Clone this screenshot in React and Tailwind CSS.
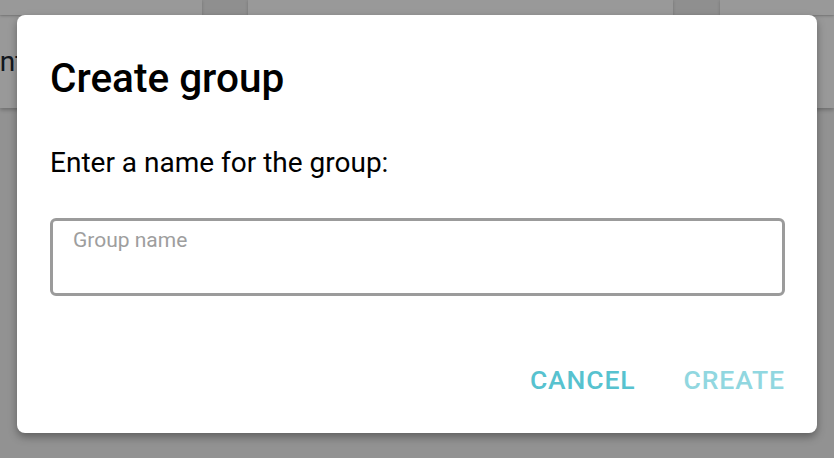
import React from "react";

const font = { fontFamily: "Roboto, 'Liberation Sans', sans-serif" };

const BackgroundPage = () => (
  <div className="w-[834px] h-[458px] bg-[#f4f4f4] overflow-hidden">
    {/* top cards strip */}
    <div className="flex h-[15px] bg-[#eeeeee]">
      <div className="w-[202px] bg-white shadow-[0_1px_3px_rgba(0,0,0,0.2)]" />
      <div className="w-[46px]" />
      <div className="w-[425px] bg-white shadow-[0_1px_3px_rgba(0,0,0,0.2)]" />
      <div className="w-[47px]" />
      <div className="flex-1 bg-white shadow-[0_1px_3px_rgba(0,0,0,0.2)]" />
    </div>
    {/* header */}
    <div className="h-[92px] bg-white shadow-[0_2px_4px_rgba(0,0,0,0.25)] flex items-center mt-[1px]">
      <span className="ml-[-74px] text-[28px] text-[#1d2733]">Content</span>
    </div>
  </div>
);

export default function App() {
  return (
    <div className="relative w-[834px] h-[458px] overflow-hidden" style={font}>
      <BackgroundPage />

      {/* overlay + dialog */}
      <div className="absolute inset-0 bg-black/40 flex justify-center items-start pt-[15px]">
        <div className="w-[800px] h-[418px] bg-white rounded-[8px] shadow-[0_4px_8px_rgba(0,0,0,0.35)] flex flex-col pt-[39px] px-[33px]">
          <h2 className="text-[40.5px] leading-[48px] font-medium text-black">
            Create group
          </h2>
          <p className="mt-[40px] text-[28px] leading-[42px] text-black">
            Enter a name for the group:
          </p>
          <div className="mt-[34px] h-[78px] border-[3px] border-[#9b9b9b] rounded-[6px] px-[20px] pt-[5px] mr-[-1px]">
            <span className="text-[21px] leading-[28px] text-[#9e9e9e]">
              Group name
            </span>
          </div>
          <div className="mt-[66px] flex justify-end items-center gap-[48px] mr-[-1px]">
            <button className="text-[26.5px] leading-[36px] font-medium tracking-[0.9px] text-[#57c2cf]">
              CANCEL
            </button>
            <button className="text-[26.5px] leading-[36px] font-medium tracking-[0.9px] text-[#91d7e0]">
              CREATE
            </button>
          </div>
        </div>
      </div>
    </div>
  );
}
